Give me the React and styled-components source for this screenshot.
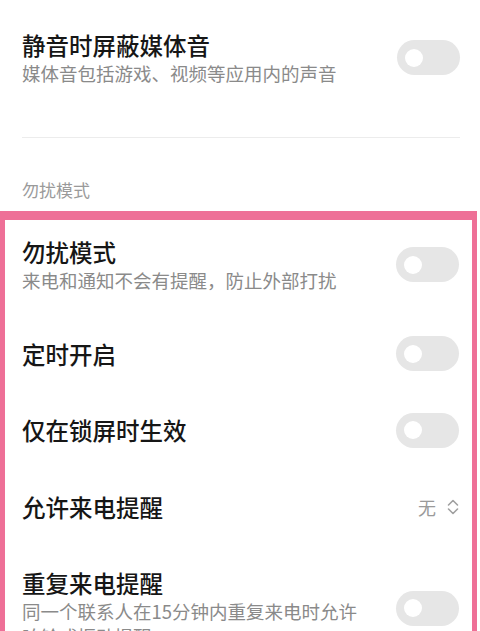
import React from "react";
import styled, { createGlobalStyle } from "styled-components";

const GlobalStyle = createGlobalStyle`
  html, body {
    margin: 0;
    padding: 0;
    background: #fff;
    overflow: hidden;
  }
  body {
    font-family: "Noto Sans CJK SC", "Noto Sans", sans-serif;
  }
`;

const Page = styled.div`
  width: 480px;
  height: 631px;
  overflow: hidden;
  background: #fff;
`;

const TopSection = styled.div`
  padding: 0 20px 0 22px;
`;

const Row = styled.div`
  display: flex;
  align-items: center;
  justify-content: space-between;
  padding: ${(p) => (p.$top ? "29px 0" : "22.25px 0")};
  &:first-child {
    padding-top: ${(p) => (p.$top ? "29px" : "16px")};
  }
`;

const TextCol = styled.div`
  display: flex;
  flex-direction: column;
  max-width: 350px;
`;

const Title = styled.div`
  font-size: 23.5px;
  line-height: 32px;
  font-weight: 500;
  color: #161616;
`;

const Sub = styled.div`
  font-size: 18.5px;
  line-height: 25px;
  color: #8a8a8a;
`;

const Toggle = styled.div`
  flex-shrink: 0;
  width: 63px;
  height: 35px;
  margin: -1.5px 0;
  border-radius: 18px;
  background: #e6e6e6;
  display: flex;
  align-items: center;
  padding-left: 8px;
  box-sizing: border-box;
  &::before {
    content: "";
    width: 18px;
    height: 18px;
    border-radius: 50%;
    background: #fff;
  }
`;

const Divider = styled.div`
  height: 1px;
  background: #ececec;
  margin: 22px 20px 0 22px;
`;

const SectionHeader = styled.div`
  font-size: 17px;
  line-height: 24px;
  color: #9a9a9a;
  padding: 40px 22px 9px;
`;

const HighlightBox = styled.div`
  border: 5px solid #ee7097;
  border-top-width: 9px;
  border-bottom: none;
  margin-right: 3px;
  padding: 0 13px 0 17px;
`;

const Picker = styled.div`
  display: flex;
  align-items: center;
  gap: 11px;
  font-size: 18px;
  line-height: 32px;
  color: #9a9a9a;
`;

const ChevronUpDown = () => (
  <svg width="12" height="18" viewBox="0 0 12 18" fill="none" stroke="#a0a0a0" strokeWidth="1.6" strokeLinecap="round" strokeLinejoin="round">
    <path d="M1.5 7 L6 2.5 L10.5 7" />
    <path d="M1.5 11 L6 15.5 L10.5 11" />
  </svg>
);

const SettingRow = ({ title, sub, top, right }) => (
  <Row $top={top}>
    <TextCol>
      <Title>{title}</Title>
      {sub && <Sub>{sub}</Sub>}
    </TextCol>
    {right || <Toggle />}
  </Row>
);

const App = () => {
  return (
    <>
      <GlobalStyle />
      <Page>
        <TopSection>
          <SettingRow
            top
            title="静音时屏蔽媒体音"
            sub="媒体音包括游戏、视频等应用内的声音"
          />
        </TopSection>
        <Divider />
        <SectionHeader>勿扰模式</SectionHeader>
        <HighlightBox>
          <SettingRow title="勿扰模式" sub="来电和通知不会有提醒，防止外部打扰" />
          <SettingRow title="定时开启" />
          <SettingRow title="仅在锁屏时生效" />
          <SettingRow
            title="允许来电提醒"
            right={
              <Picker>
                无
                <ChevronUpDown />
              </Picker>
            }
          />
          <SettingRow
            title="重复来电提醒"
            sub="同一个联系人在15分钟内重复来电时允许响铃或振动提醒"
          />
        </HighlightBox>
      </Page>
    </>
  );
};

export default App;
